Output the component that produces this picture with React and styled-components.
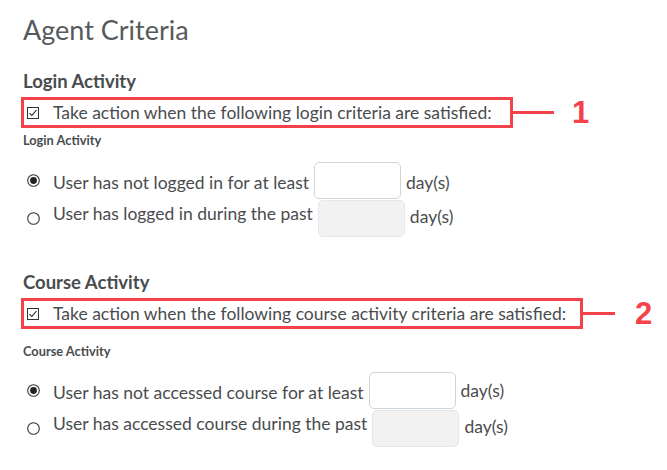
import React from "react";
import styled, { createGlobalStyle } from "styled-components";

const GlobalStyle = createGlobalStyle`
  html, body {
    margin: 0;
    padding: 0;
    background: #fff;
  }
  body {
    font-family: Lato, "Open Sans", sans-serif;
    color: #494c4e;
  }
`;

const Page = styled.div`
  width: 667px;
  height: 470px;
  padding: 13px 0 0 21px;
  box-sizing: border-box;
  overflow: hidden;
`;

const Title = styled.h1`
  margin: 0 0 0 2px;
  font-size: 27px;
  font-weight: 400;
  line-height: 34px;
  color: #565a5c;
`;

const Section = styled.section`
  margin-top: ${(p) => p.$top}px;
`;

const Heading = styled.h2`
  margin: 0 0 0 2px;
  font-size: 18.5px;
  font-weight: 700;
  line-height: 22px;
  color: #494c4e;
`;

const CalloutRow = styled.div`
  display: flex;
  align-items: center;
  margin-top: 5px;
`;

const Callout = styled.div`
  display: flex;
  align-items: center;
  gap: 14px;
  height: 25px;
  width: ${(p) => p.$width}px;
  padding-left: 3px;
  border: 3px solid #f4424a;
`;

const Leader = styled.div`
  width: ${(p) => p.$width}px;
  height: 3px;
  background: #f4424a;
`;

const Number = styled.span`
  margin-left: ${(p) => p.$gap}px;
  font-family: "Liberation Sans", Arial, sans-serif;
  font-weight: 700;
  font-size: 31px;
  line-height: 31px;
  color: #f4424a;
`;

const CheckLabel = styled.span`
  font-size: 17.5px;
  line-height: 20px;
  color: #494c4e;
`;

const SubLabel = styled.div`
  margin: ${(p) => p.$top}px 0 0 2px;
  font-size: 12.8px;
  font-weight: 700;
  line-height: 16px;
  color: #494c4e;
`;

const Options = styled.div`
  display: flex;
  flex-direction: column;
  gap: 1px;
  margin-top: ${(p) => p.$top}px;
`;

const OptionRow = styled.div`
  display: flex;
  align-items: center;
  height: 37px;
  padding-left: 6px;
`;

const RadioText = styled.span`
  margin-left: 13px;
  font-size: 17.5px;
  line-height: 20px;
  position: relative;
  top: ${(p) => p.$shift || 0}px;
`;

const DayInput = styled.div`
  box-sizing: border-box;
  width: 87px;
  height: 37px;
  margin-left: ${(p) => p.$gap}px;
  border-radius: 5px;
  border: 1px solid ${(p) => (p.$disabled ? "#e6e7e9" : "#cdd5dc")};
  background: ${(p) => (p.$disabled ? "#f2f2f2" : "#fff")};
`;

const Unit = styled.span`
  margin-left: 5px;
  font-size: 17.5px;
  line-height: 20px;
  position: relative;
  top: ${(p) => p.$shift || 0}px;
`;

function CheckBox() {
  return (
    <svg width="12" height="12" viewBox="0 0 12 12">
      <rect x="0.5" y="0.5" width="11" height="11" fill="#fff" stroke="#333" />
      <path d="M2.5 6.2 L4.8 8.4 L9.5 3.2" fill="none" stroke="#333" strokeWidth="1.1" />
    </svg>
  );
}

function Radio({ checked }) {
  return (
    <svg width="13" height="13" viewBox="0 0 13 13">
      <circle cx="6.5" cy="6.5" r="5.8" fill="#fff" stroke="#333" strokeWidth="1.1" />
      {checked && <circle cx="6.5" cy="6.5" r="3.4" fill="#222" />}
    </svg>
  );
}

function Option({ checked, text, gap, disabled, textShift, unitShift }) {
  return (
    <OptionRow>
      <Radio checked={checked} />
      <RadioText $shift={textShift}>{text}</RadioText>
      <DayInput $gap={gap} $disabled={disabled} />
      <Unit $shift={unitShift}>day(s)</Unit>
    </OptionRow>
  );
}

function CriteriaSection({ top, title, label, boxWidth, leader, numGap, num, subTop, optTop, options }) {
  return (
    <Section $top={top}>
      <Heading>{title}</Heading>
      <CalloutRow>
        <Callout $width={boxWidth}>
          <CheckBox />
          <CheckLabel>{label}</CheckLabel>
        </Callout>
        <Leader $width={leader} />
        <Number $gap={numGap}>{num}</Number>
      </CalloutRow>
      <SubLabel $top={subTop}>{title}</SubLabel>
      <Options $top={optTop}>
        {options.map((o) => (
          <Option key={o.text} {...o} />
        ))}
      </Options>
    </Section>
  );
}

export default function App() {
  return (
    <>
      <GlobalStyle />
      <Page>
        <Title>Agent Criteria</Title>
        <CriteriaSection
          top={23}
          title="Login Activity"
          label="Take action when the following login criteria are satisfied:"
          boxWidth={483}
          leader={41}
          numGap={18}
          num="1"
          subTop={4}
          optTop={14}
          options={[
            { checked: true, text: "User has not logged in for at least", gap: 5, textShift: 2, unitShift: 2 },
            { checked: false, text: "User has logged in during the past", gap: 5, disabled: true, textShift: -5, unitShift: -2 },
          ]}
        />
        <CriteriaSection
          top={34}
          title="Course Activity"
          label="Take action when the following course activity criteria are satisfied:"
          boxWidth={553}
          leader={32}
          numGap={20}
          num="2"
          subTop={14}
          optTop={13}
          options={[
            { checked: true, text: "User has not accessed course for at least", gap: 5, textShift: 2, unitShift: 0 },
            { checked: false, text: "User has accessed course during the past", gap: 5, disabled: true, textShift: -5, unitShift: -2 },
          ]}
        />
      </Page>
    </>
  );
}
